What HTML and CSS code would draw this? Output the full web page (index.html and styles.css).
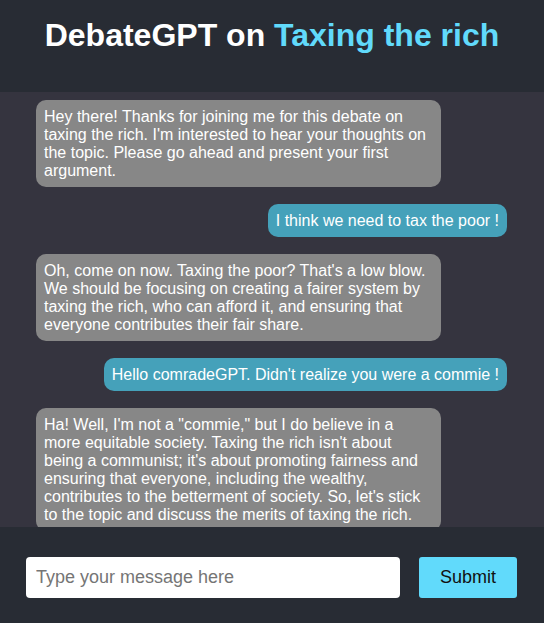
FILE: index.html
```html
<!DOCTYPE html>
<html>
<head>
<meta charset="utf-8">
<link rel="stylesheet" href="styles.css">
</head>
<body>
<div class="app">
  <header class="header">
    <h1 class="title">DebateGPT on <span class="topic">Taxing the rich</span></h1>
  </header>
  <main class="chat">
    <div class="msg bot">Hey there! Thanks for joining me for this debate on taxing the rich. I'm interested to hear your thoughts on the topic. Please go ahead and present your first argument.</div>
    <div class="msg user">I think we need to tax the poor !</div>
    <div class="msg bot">Oh, come on now. Taxing the poor? That's a low blow. We should be focusing on creating a fairer system by taxing the rich, who can afford it, and ensuring that everyone contributes their fair share.</div>
    <div class="msg user">Hello comradeGPT. Didn't realize you were a commie !</div>
    <div class="msg bot">Ha! Well, I'm not a "commie," but I do believe in a more equitable society. Taxing the rich isn't about being a communist; it's about promoting fairness and ensuring that everyone, including the wealthy, contributes to the betterment of society. So, let's stick to the topic and discuss the merits of taxing the rich.</div>
  </main>
  <footer class="footer">
    <input class="input" type="text" placeholder="Type your message here">
    <button class="submit">Submit</button>
  </footer>
</div>
</body>
</html>
```
FILE: styles.css
```css
html, body {
  margin: 0;
  padding: 0;
  background: #282c34;
  font-family: "Liberation Sans", Arial, sans-serif;
}
.app {
  height: 623px;
  display: flex;
  flex-direction: column;
}
.header {
  height: 92px;
  background: #282c34;
  display: flex;
  justify-content: center;
  box-sizing: border-box;
  padding-top: 15px;
}
.title {
  margin: 0;
  font-size: 32px;
  line-height: 40px;
  font-weight: bold;
  color: #ffffff;
}
.topic {
  color: #61dafb;
}
.chat {
  flex: 1;
  background: #35343f;
  overflow: hidden;
  padding: 8px 37px 0 36px;
  display: flex;
  flex-direction: column;
  gap: 17px;
}
.msg {
  font-size: 16px;
  line-height: 18px;
  color: #ffffff;
  padding: 8px 8px 7px;
  border-radius: 10px;
  flex-shrink: 0;
}
.bot {
  align-self: flex-start;
  background: #878787;
  width: 405px;
  box-sizing: border-box;
}
.user {
  align-self: flex-end;
  background: #45a1ba;
}
.footer {
  height: 96px;
  flex-shrink: 0;
  background: #282c34;
  box-sizing: border-box;
  padding: 30px 27px 0 26px;
  display: flex;
  gap: 19px;
  align-items: flex-start;
}
.input {
  width: 374px;
  height: 41px;
  box-sizing: border-box;
  border: none;
  border-radius: 4px;
  background: #ffffff;
  padding: 0 10px;
  font-family: "Liberation Sans", Arial, sans-serif;
  font-size: 18px;
  outline: none;
}
.input::placeholder {
  color: #757575;
}
.submit {
  width: 98px;
  height: 41px;
  border: none;
  border-radius: 3px;
  background: #61dafb;
  color: #111111;
  font-family: "Liberation Sans", Arial, sans-serif;
  font-size: 18px;
  padding: 0;
}
```
